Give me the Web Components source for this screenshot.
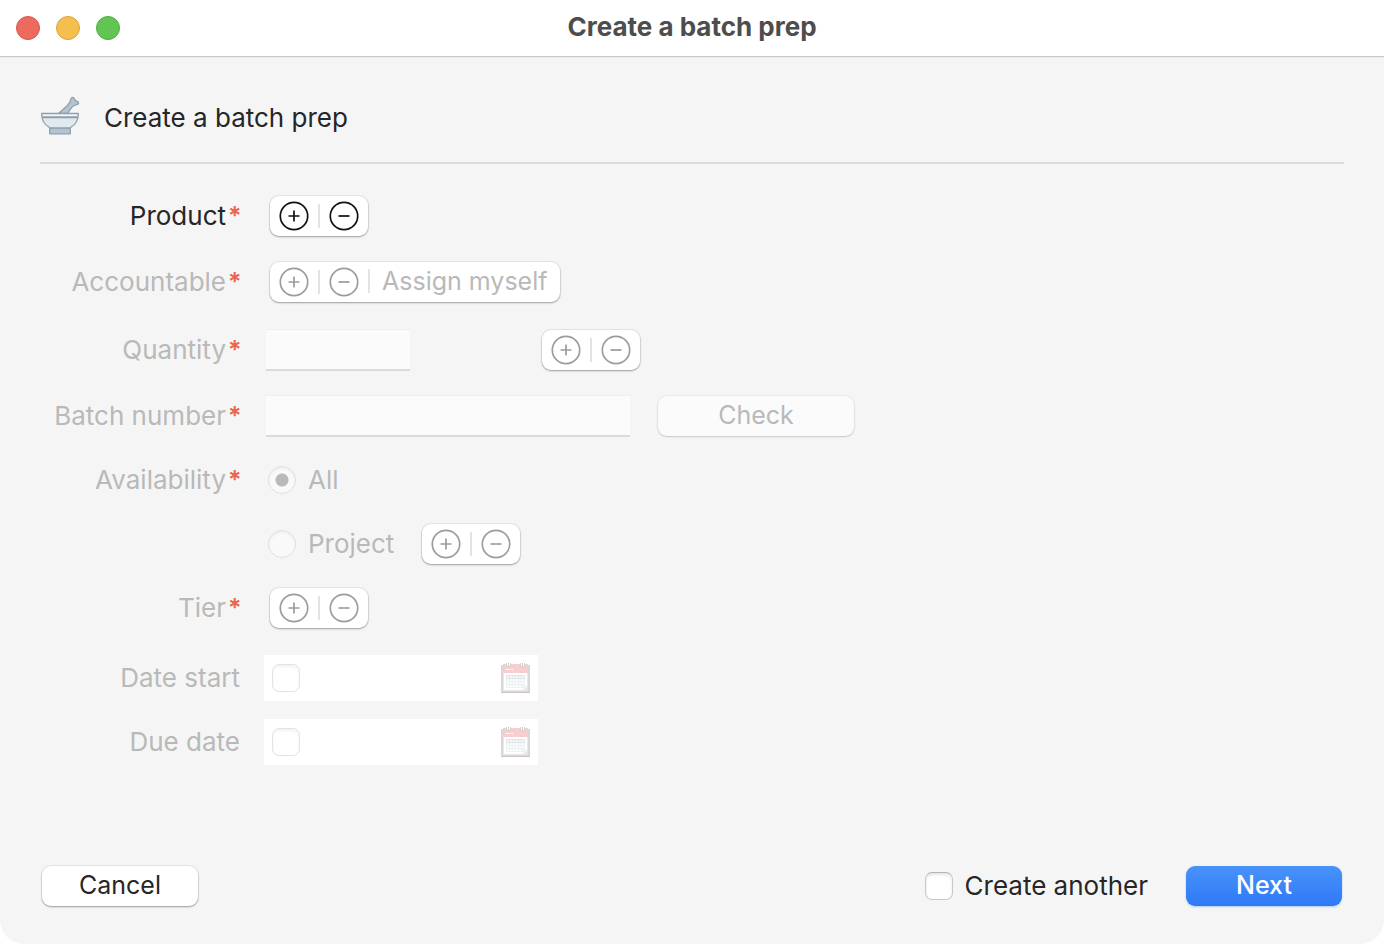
<!DOCTYPE html>
<html lang="en">
<head>
<meta charset="utf-8">
<title>Create a batch prep</title>
<style>
  body {
    margin: 0;
    background: #fff;
    color: #262626;
    font: 26px/32px Inter, "Liberation Sans", sans-serif;
    --txt-disabled: #b9b9b9;
    --button-size: 25px;
    --shadow-control: 0 0 0 1px rgba(0,0,0,0.06), 0 1px 2px rgba(0,0,0,0.32);
  }
</style>
</head>
<body>
<app-window heading="Create a batch prep">
  <batch-prep-form></batch-prep-form>
</app-window>

<script>
// base class: renders the static markup of a component in its shadow root
class Component extends HTMLElement {
  constructor() {
    super();
    this.dom = this.attachShadow({ mode: "open" });
  }

  connectedCallback() {
    const template = document.createElement("template");
    template.innerHTML = `<style>${this.css()}</style>${this.markup()}`;
    this.dom.replaceChildren(document.importNode(template.content, true));
  }
}

// shared by every component that holds a native check box
const checkboxCss = `
  input[type="checkbox"] {
    appearance: none;
    flex: none;
    box-sizing: border-box;
    width: 28px;
    height: 28px;
    margin: 0;
    border: 1px solid #c8c8c8;
    border-top-color: #b4b4b4;
    border-radius: 7px;
    background: #fff;
    box-shadow: inset 0 2px 3px rgba(0,0,0,0.1);
  }
  input[type="checkbox"]:checked {
    background: #3a84f7;
  }
  input[type="checkbox"]:disabled {
    border-color: #e3e3e3;
    box-shadow: inset 0 2px 3px rgba(0,0,0,0.05);
  }
`;

class AppWindow extends Component {
  css() {
    return `
      :host {
        display: flex;
        flex-direction: column;
        min-height: 100vh;
      }
      header {
        display: grid;
        grid-template-columns: 1fr auto 1fr;
        align-items: center;
        height: 56px;
        padding: 0 16px;
        border-bottom: 1px solid #cacaca;
      }
      .lights {
        display: flex;
        gap: 16px;
      }
      .lights button {
        width: 24px;
        height: 24px;
        padding: 0;
        border: 1px solid #d8584e;
        border-radius: 50%;
        background: #ed6a5e;
      }
      .lights .minimize {
        border-color: #dba33e;
        background: #f5bf4f;
      }
      .lights .zoom {
        border-color: #4fae40;
        background: #61c554;
      }
      h1 {
        margin: 0;
        padding-bottom: 2px;
        font-size: 26px;
        font-weight: 700;
        color: #4d4d4d;
      }
      main {
        flex: 1;
        display: flex;
        flex-direction: column;
        border-top: 1px solid #ececec;
        border-radius: 0 0 24px 24px;
        background: #f5f5f5;
      }
    `;
  }

  markup() {
    return `
      <header>
        <div class="lights">
          <button class="close" aria-label="Close"></button>
          <button class="minimize" aria-label="Minimize"></button>
          <button class="zoom" aria-label="Zoom"></button>
        </div>
        <h1>${this.getAttribute("heading")}</h1>
      </header>
      <main><slot></slot></main>
    `;
  }
}

class FormHeading extends Component {
  css() {
    return `
      :host {
        display: flex;
        align-items: center;
        gap: 24px;
        padding: 38px 0 26px;
        border-bottom: 2px solid #dcdcdc;
      }
      svg {
        width: 40px;
        height: 40px;
      }
      h2 {
        margin: 0;
        padding-top: 4px;
        font-size: 26px;
        font-weight: 400;
      }
    `;
  }

  markup() {
    return `
      <svg viewBox="0 0 40 40" fill="none" stroke="#8e9fad" stroke-width="1.3" stroke-linejoin="round" aria-hidden="true">
        <path fill="#b3c3d0" d="M18.500 17.500 27.500 9.500C29.500 7.500 30.300 5.800 30.700 3.600c.3-1.800 1.700-2.600 2.900-1.800 1 .7.900 1.900 1.900 2.800 1 .8 2.300.6 2.900 1.600.6 1.100-.5 2.200-1.900 2.400-2.300.4-3.700 1.200-5.200 3.200L27.500 17.500Z"/>
        <path fill="#b3c3d0" d="M9.700 31.500h20.600v6.300H9.700z"/>
        <path fill="#e0e8f0" d="M2 21.500c.7 3.800 3 7.200 6.500 9.300 1 .6 1.300 1.200 2.200 1.200h18.600c.9 0 1.200-.6 2.200-1.200 3.500-2.100 5.800-5.500 6.500-9.300Z"/>
        <path fill="#f0f5fa" d="M1.700 17.500h36.600v1.800c0 1-.7 1.700-1.700 1.700H3.400c-1 0-1.700-.7-1.700-1.700Z"/>
      </svg>
      <h2><slot></slot></h2>
    `;
  }
}

class FormRow extends Component {
  css() {
    return `
      :host {
        display: grid;
        grid-template-columns: 200px 1fr;
        align-items: center;
        gap: 24px;
        height: var(--row-height, 64px);
      }
      :host([disabled]) {
        color: var(--txt-disabled);
      }
      .label {
        display: flex;
        justify-content: flex-end;
        gap: 2px;
        white-space: nowrap;
      }
      .mark {
        width: 12px;
        font-size: 25px;
        font-weight: 600;
        color: #e8654f;
      }
      .controls {
        display: flex;
        align-items: center;
      }
    `;
  }

  markup() {
    const mark = this.hasAttribute("required") ? `<span class="mark">*</span>` : "";
    return `
      <div class="label"><slot name="label"></slot>${mark}</div>
      <div class="controls"><slot></slot></div>
    `;
  }
}

// add / remove pair, with an optional text button after it
class PickButtons extends Component {
  css() {
    return `
      :host {
        display: inline-flex;
        align-items: center;
        height: 40px;
        margin-left: 6px;
        border-radius: 9px;
        background: #fff;
        box-shadow: var(--shadow-control);
      }
      button {
        display: flex;
        align-items: center;
        justify-content: center;
        width: 48px;
        height: 40px;
        padding: 0;
        border: 0;
        background: transparent;
        font: inherit;
        font-size: var(--button-size);
        color: #111;
      }
      button + button {
        position: relative;
        margin-left: 2px;
      }
      button + button::before {
        content: "";
        position: absolute;
        left: -2px;
        width: 2px;
        height: 24px;
        background: #e3e3e3;
      }
      button:disabled {
        color: #9c9c9c;
      }
      button.text {
        width: auto;
        padding: 0 12px 2px;
        color: var(--txt-disabled);
      }
      svg {
        width: 30px;
        height: 30px;
        fill: none;
        stroke: currentColor;
        stroke-width: 1.7;
      }
    `;
  }

  markup() {
    const off = this.hasAttribute("disabled") ? "disabled" : "";
    const name = this.getAttribute("label");
    const text = this.hasAttribute("action")
      ? `<button class="text" type="button" ${off}>${this.getAttribute("action")}</button>`
      : "";
    return `
      <button type="button" aria-label="Add ${name}" ${off}>
        <svg viewBox="0 0 30 30"><circle cx="15" cy="15" r="13.700"/><path d="M9.500 15h11M15 9.500v11"/></svg>
      </button>
      <button type="button" aria-label="Remove ${name}" ${off}>
        <svg viewBox="0 0 30 30"><circle cx="15" cy="15" r="13.700"/><path d="M9.500 15h11"/></svg>
      </button>
      ${text}
    `;
  }
}

class PushButton extends Component {
  css() {
    return `
      :host {
        display: inline-block;
        width: 156px;
      }
      button {
        display: block;
        width: 100%;
        height: 40px;
        padding: 0 0 2px;
        border: 0;
        border-radius: 9px;
        background: #fff;
        box-shadow: var(--shadow-control);
        font: inherit;
        font-size: var(--button-size);
        color: inherit;
      }
      button:disabled {
        background: #fbfbfb;
        box-shadow: 0 0 0 1px rgba(0,0,0,0.03), 0 1px 2px rgba(0,0,0,0.16);
        color: var(--txt-disabled);
      }
      :host([primary]) button {
        background: linear-gradient(#4893f9, #2f79f6);
        box-shadow: 0 1px 2px rgba(47,121,246,0.35);
        font-weight: 500;
        color: #fff;
      }
    `;
  }

  markup() {
    const off = this.hasAttribute("disabled") ? "disabled" : "";
    return `<button type="button" ${off}><slot></slot></button>`;
  }
}

class DateRow extends Component {
  css() {
    return `
      :host {
        display: block;
      }
      ${checkboxCss}
      .field {
        display: flex;
        align-items: center;
        box-sizing: border-box;
        width: 274px;
        height: 46px;
        padding: 0 8px;
        background: #fff;
      }
      input[type="text"] {
        flex: 1;
        min-width: 0;
        padding: 0 8px;
        border: 0;
        background: transparent;
        font: inherit;
      }
      button {
        flex: none;
        padding: 0;
        border: 0;
        background: transparent;
      }
      svg {
        display: block;
        width: 30px;
        height: 32px;
      }
    `;
  }

  markup() {
    const label = this.getAttribute("label");
    return `
      <form-row disabled>
        <label slot="label" for="date">${label}</label>
        <div class="field">
          <input type="checkbox" aria-label="Set ${label}" disabled>
          <input type="text" id="date" disabled>
          <button type="button" aria-label="Pick ${label}" disabled>
            <svg viewBox="0 0 30 32">
              <path fill="#dcd6d8" d="M1 3h29v28H1z"/>
              <path fill="#cdc6c8" d="M1 30h29v1H1z"/>
              <path fill="#ebe6e8" d="M3 3h25v26H3z"/>
              <path fill="#f7cdcd" d="M3 2h25v9H3z"/>
              <path fill="#fff" d="M4 11h23v13l-4 4H4z"/>
              <path fill="#edf3f4" d="M27 24h-4v4z"/>
              <path fill="#e1e5e6" d="M6 13h19v4H6z"/>
              <path fill="#edf2f3" d="M6 17h19v7l-2 2H6z"/>
              <path stroke="#fff" stroke-width="2" stroke-dasharray="2 1" d="M7 15h17M7 18h17M7 21h17M7 24h15" opacity=".8"/>
              <path stroke="#fff" stroke-dasharray="1.500 .5" d="M6 7.500h7"/>
              <path fill="#d9cfcf" d="M6 1h5v4H6zM20 1h5v4h-5z"/>
              <path stroke="#fff" d="M7.500 1v3M9.500 1v3M21.500 1v3M23.500 1v3"/>
            </svg>
          </button>
        </div>
      </form-row>
    `;
  }
}

class BatchPrepForm extends Component {
  css() {
    return `
      :host {
        flex: 1;
        display: flex;
        flex-direction: column;
        padding: 0 40px;
      }
      ${checkboxCss}
      .rows {
        flex: 1;
        padding-top: 20px;
      }
      .tall {
        --row-height: 68px;
      }
      .dates {
        padding-top: 6px;
      }
      input[type="text"] {
        box-sizing: border-box;
        height: 42px;
        margin: 0 0 0 2px;
        padding: 0 8px;
        border: solid #efefef;
        border-width: 1px 0 2px;
        border-bottom-color: #dadada;
        background: #fbfbfb;
        font: inherit;
      }
      #quantity {
        width: 144px;
      }
      #batch {
        width: 364px;
      }
      .unit {
        width: 126px;
      }
      .check {
        width: 196px;
        margin-left: 28px;
      }
      input[type="radio"] {
        appearance: none;
        box-sizing: border-box;
        width: 28px;
        height: 28px;
        margin: 0 12px 0 4px;
        border: 1px solid #dfdfdf;
        border-radius: 50%;
        background: #f9f9f9;
        box-shadow: inset 0 2px 3px rgba(0,0,0,0.04);
      }
      input[type="radio"]:checked {
        background: radial-gradient(circle, #b9b9b9 6px, #f9f9f9 7px);
      }
      .project {
        margin-left: 28px;
      }
      footer {
        display: flex;
        align-items: center;
        padding: 0 2px 38px;
      }
      .another {
        display: flex;
        align-items: center;
        gap: 12px;
        margin: 0 38px 0 auto;
      }
    `;
  }

  markup() {
    return `
      <form-heading>Create a batch prep</form-heading>
      <div class="rows">
        <form-row required>
          <span slot="label">Product</span>
          <pick-buttons label="product"></pick-buttons>
        </form-row>
        <form-row class="tall" required disabled>
          <span slot="label">Accountable</span>
          <pick-buttons label="accountable" action="Assign myself" disabled></pick-buttons>
        </form-row>
        <form-row class="tall" required disabled>
          <label slot="label" for="quantity">Quantity</label>
          <input type="text" id="quantity" disabled>
          <span class="unit"></span>
          <pick-buttons label="unit" disabled></pick-buttons>
        </form-row>
        <form-row required disabled>
          <label slot="label" for="batch">Batch number</label>
          <input type="text" id="batch" disabled>
          <push-button class="check" disabled>Check</push-button>
        </form-row>
        <form-row required disabled>
          <span slot="label">Availability</span>
          <input type="radio" name="availability" id="all" checked disabled>
          <label for="all">All</label>
        </form-row>
        <form-row disabled>
          <input type="radio" name="availability" id="project" disabled>
          <label for="project">Project</label>
          <pick-buttons class="project" label="project" disabled></pick-buttons>
        </form-row>
        <form-row required disabled>
          <span slot="label">Tier</span>
          <pick-buttons label="tier" disabled></pick-buttons>
        </form-row>
        <div class="dates">
          <date-row label="Date start"></date-row>
          <date-row label="Due date"></date-row>
        </div>
      </div>
      <footer>
        <push-button>Cancel</push-button>
        <label class="another"><input type="checkbox">Create another</label>
        <push-button primary>Next</push-button>
      </footer>
    `;
  }
}

const components = {
  "app-window": AppWindow,
  "form-heading": FormHeading,
  "form-row": FormRow,
  "pick-buttons": PickButtons,
  "push-button": PushButton,
  "date-row": DateRow,
  "batch-prep-form": BatchPrepForm
};

Object.keys(components).forEach(tag => {
  if (window.customElements.get(tag) === undefined) {
    window.customElements.define(tag, components[tag]);
  }
});
</script>
</body>
</html>
